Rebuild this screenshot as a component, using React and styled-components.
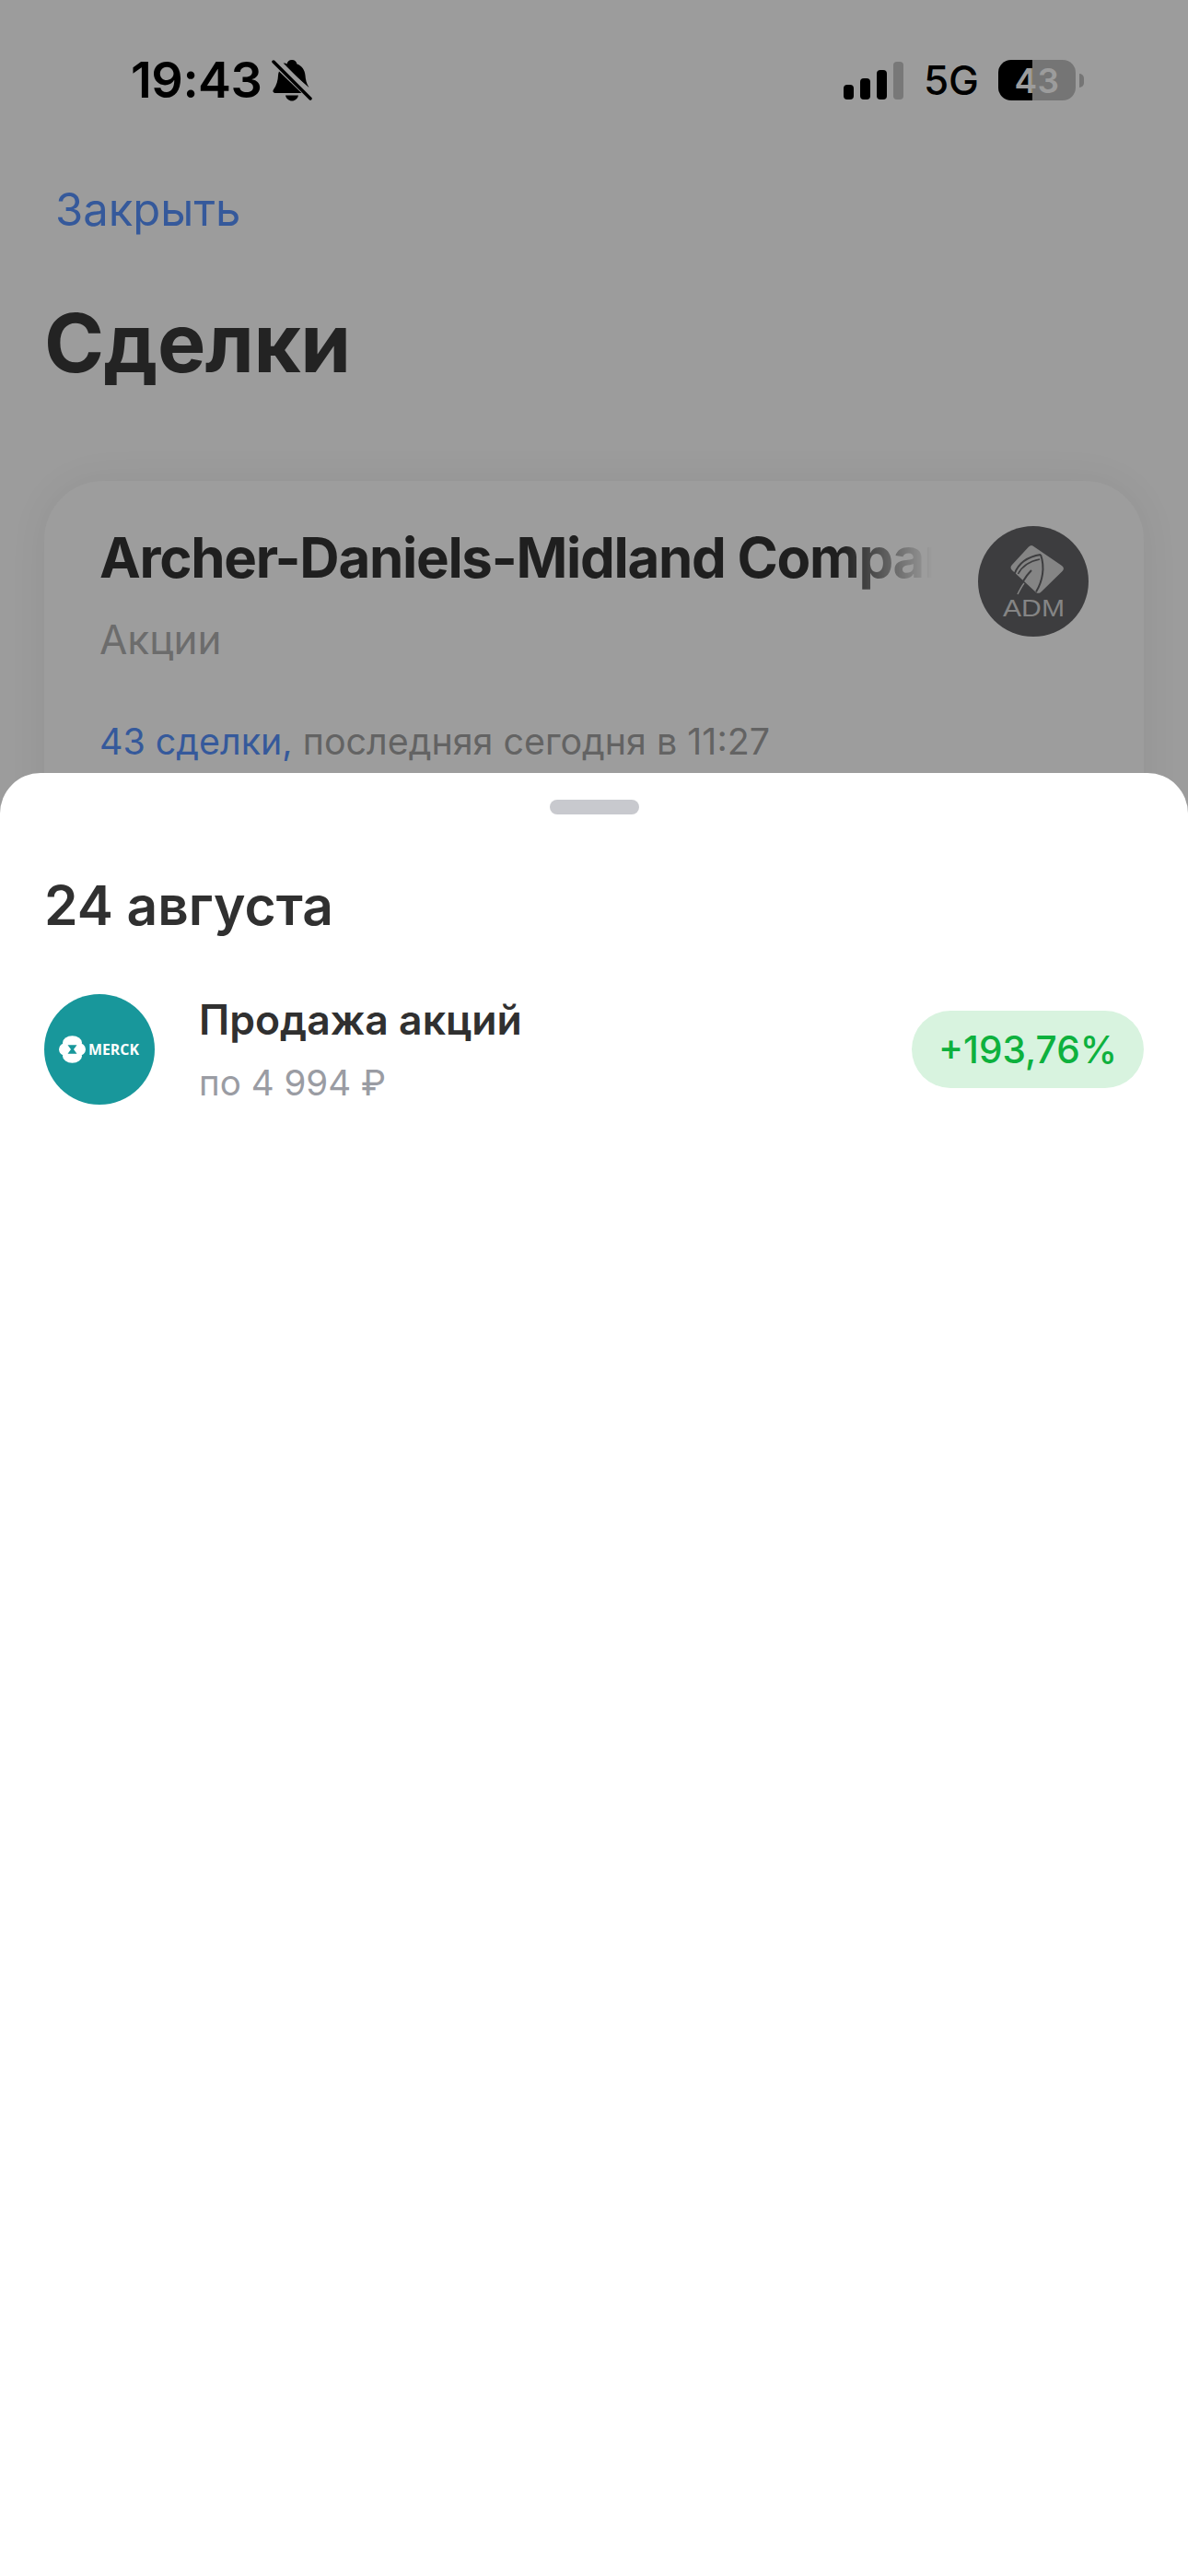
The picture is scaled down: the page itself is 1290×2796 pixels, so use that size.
import React from "react";
import styled, { createGlobalStyle } from "styled-components";

const Global = createGlobalStyle`
  html, body { margin: 0; padding: 0; background: #9c9c9c; }
  * { box-sizing: border-box; }
  body { font-family: Inter, "Noto Sans", "Liberation Sans", sans-serif; }
`;

const Screen = styled.div`
  position: relative;
  width: 1290px;
  height: 2796px;
  overflow: hidden;
  background: #9c9c9c;
`;

const Backdrop = styled.div`
  display: flex;
  flex-direction: column;
  height: 900px;
  overflow: hidden;
`;

const StatusBar = styled.header`
  display: flex;
  align-items: center;
  justify-content: space-between;
  height: 64px;
  margin-top: 55px;
  padding: 0 122px 0 142px;
`;

const StatusLeft = styled.div`
  display: flex;
  align-items: center;
  gap: 11px;
`;

const Time = styled.span`
  font-size: 54px;
  font-weight: 600;
  line-height: 64px;
  color: #000;
  letter-spacing: -0.5px;
`;

const StatusRight = styled.div`
  display: flex;
  align-items: center;
`;

const Network = styled.span`
  margin: 0 21px 0 22px;
  font-size: 44px;
  font-weight: 500;
  color: #000;
  line-height: 64px;
`;

const Battery = styled.div`
  position: relative;
  display: flex;
  align-items: center;
  justify-content: center;
  width: 84px;
  height: 44px;
  border-radius: 14px;
  background: linear-gradient(90deg, #000 0 44%, #757575 44% 100%);
  font-size: 37px;
  font-weight: 600;
  color: #9c9c9c;
  letter-spacing: 0.5px;

  &::after {
    content: "";
    position: absolute;
    right: -9px;
    top: 15px;
    width: 5px;
    height: 15px;
    border-radius: 0 8px 8px 0;
    background: #757575;
  }
`;

const CloseLink = styled.div`
  margin: 77px 0 0 60px;
  font-size: 49px;
  line-height: 64px;
  color: #35599b;
`;

const PageTitle = styled.h1`
  margin: 58px 0 0 48px;
  font-size: 88px;
  line-height: 108px;
  font-weight: 700;
  color: #232323;
  letter-spacing: -0.5px;
`;

const Card = styled.section`
  display: flex;
  flex: none;
  justify-content: space-between;
  margin: 96px 48px 0;
  height: 420px;
  padding: 47px 60px 0;
  border-radius: 64px;
  background: #9d9d9d;
  box-shadow: 0 0 44px rgba(0, 0, 0, 0.06);
`;

const CardBody = styled.div`
  display: flex;
  flex-direction: column;
  align-items: flex-start;
`;

const CardTitle = styled.h2`
  width: 904px;
  margin: 0;
  overflow: hidden;
  white-space: nowrap;
  font-size: 60px;
  line-height: 72px;
  font-weight: 700;
  letter-spacing: -1.3px;
  color: #1f1f1f;
  mask-image: linear-gradient(90deg, #000 89%, transparent 100%);
`;

const CardKind = styled.div`
  margin-top: 26px;
  font-size: 44px;
  line-height: 54px;
  color: #6c6c6c;
`;

const CardMeta = styled.div`
  margin-top: 59px;
  font-size: 39.4px;
  line-height: 50px;
  color: #636363;
`;

const Accent = styled.span`
  color: #35599b;
`;

const CardLogo = styled.div`
  flex: none;
  height: 120px;
  margin-top: 2px;
`;

const Sheet = styled.section`
  position: absolute;
  left: 0;
  right: 0;
  top: 839px;
  bottom: 0;
  padding: 29px 48px 0;
  border-radius: 44px 44px 0 0;
  background: #fff;
`;

const Handle = styled.div`
  width: 97px;
  height: 16px;
  margin: 0 auto;
  border-radius: 8px;
  background: #c8c9ce;
`;

const DayTitle = styled.h3`
  margin: 64px 0 0;
  font-size: 58.7px;
  line-height: 70px;
  font-weight: 600;
  color: #303030;
`;

const Deal = styled.div`
  display: flex;
  align-items: center;
  margin-top: 61px;
`;

const DealInfo = styled.div`
  flex: 1;
  margin-left: 48px;
`;

const DealTitle = styled.div`
  font-size: 44.5px;
  line-height: 56px;
  font-weight: 600;
  color: #303030;
`;

const DealSub = styled.div`
  margin-top: 16px;
  font-size: 38.6px;
  line-height: 48px;
  color: #9a9ca3;
`;

const Pill = styled.div`
  display: flex;
  align-items: center;
  justify-content: center;
  width: 252px;
  height: 84px;
  border-radius: 42px;
  background: #d8f3df;
  font-size: 40.6px;
  font-weight: 500;
  color: #0eb13e;
`;

const BellOff = () => (
  <svg width="44" height="48" viewBox="0 0 44 48">
    <path d="M22 2c3 0 5 2 5.500 4.500C33 8.500 36 13 36.500 19c.3 4 1 8 4 13L11 6.500C13 5 15 5 16.500 6.500 17 4 19 2 22 2z" fill="#000" />
    <path d="M8 14.500 32.500 38H3.500c-1.800 0-2.800-1.900-1.700-3.400C5.500 29.500 6.800 24 7 19c0-1.700.4-3 1-4.500z" fill="#000" />
    <path d="M15 40.500h14c-.8 3.600-3.600 6-7 6s-6.200-2.400-7-6z" fill="#000" />
    <path d="M2 4 42 44" stroke="#000" strokeWidth="3.500" strokeLinecap="round" />
    <path d="M6 1 46 41" stroke="#9c9c9c" strokeWidth="3" />
  </svg>
);

const Signal = () => (
  <svg width="65" height="41" viewBox="0 0 65 41">
    <rect x="0" y="25" width="11" height="16" rx="4" fill="#000" />
    <rect x="18" y="18" width="11" height="23" rx="4" fill="#000" />
    <rect x="36" y="9" width="11" height="32" rx="4" fill="#000" />
    <rect x="54" y="0" width="11" height="41" rx="4" fill="#787878" />
  </svg>
);

const AdmLogo = () => (
  <svg width="120" height="120" viewBox="0 0 120 120">
    <circle cx="60" cy="60" r="60" fill="#3d3d3f" />
    <path d="M55 22.500c2-2 4-2 6 0L91 43c2.500 2 2.500 4 .5 6L69 71c-2 2-4 2.500-6 1L37 48c-2-2-2-4 0-6z" fill="#858585" />
    <path d="M68 31C55 33 44 40 39.500 52" fill="none" stroke="#3d3d3f" strokeWidth="2" />
    <path d="M67 36C57 38 48 43 43.500 52" fill="none" stroke="#3d3d3f" strokeWidth="1.500" />
    <path d="M68 31C73 45 70 60 63 71.500" fill="none" stroke="#3d3d3f" strokeWidth="2" />
    <path d="M58 48C51 55 46 64 43 74" fill="none" stroke="#3d3d3f" strokeWidth="2" />
    <path d="M50 62C47 66 45 70 43 74" fill="none" stroke="#858585" strokeWidth="1.500" />
    <text x="60.500" y="98" textAnchor="middle" fontFamily="'Liberation Sans', sans-serif" fontSize="25" textLength="67" lengthAdjust="spacingAndGlyphs" fill="#858585">ADM</text>
  </svg>
);

const MerckLogo = () => (
  <svg width="120" height="120" viewBox="0 0 120 120">
    <circle cx="60" cy="60" r="60" fill="#18979b" />
    <ellipse cx="30.500" cy="52.800" rx="10.500" ry="7.500" fill="#fff" />
    <ellipse cx="30.500" cy="67.200" rx="10.500" ry="7.500" fill="#fff" />
    <ellipse cx="23.500" cy="60" rx="7.500" ry="7" fill="#fff" />
    <ellipse cx="37.500" cy="60" rx="7.500" ry="7" fill="#fff" />
    <path d="M25.500 55.300h10L32 60l3.500 4.700h-10L29 60z" fill="#18979b" />
    <text x="48" y="66" fontFamily="'Open Sans', sans-serif" fontSize="16.500" fontWeight="700" textLength="55" lengthAdjust="spacingAndGlyphs" fill="#fff">MERCK</text>
  </svg>
);

export default function App() {
  return (
    <Screen>
      <Global />
      <Backdrop>
        <StatusBar>
          <StatusLeft>
            <Time>19:43</Time>
            <BellOff />
          </StatusLeft>
          <StatusRight>
            <Signal />
            <Network>5G</Network>
            <Battery>43</Battery>
          </StatusRight>
        </StatusBar>
        <CloseLink>Закрыть</CloseLink>
        <PageTitle>Сделки</PageTitle>
        <Card>
          <CardBody>
            <CardTitle>Archer-Daniels-Midland Company</CardTitle>
            <CardKind>Акции</CardKind>
            <CardMeta>
              <Accent>43 сделки,</Accent> последняя сегодня в 11:27
            </CardMeta>
          </CardBody>
          <CardLogo>
            <AdmLogo />
          </CardLogo>
        </Card>
      </Backdrop>
      <Sheet>
        <Handle />
        <DayTitle>24 августа</DayTitle>
        <Deal>
          <MerckLogo />
          <DealInfo>
            <DealTitle>Продажа акций</DealTitle>
            <DealSub>по 4 994 ₽</DealSub>
          </DealInfo>
          <Pill>+193,76%</Pill>
        </Deal>
      </Sheet>
    </Screen>
  );
}
